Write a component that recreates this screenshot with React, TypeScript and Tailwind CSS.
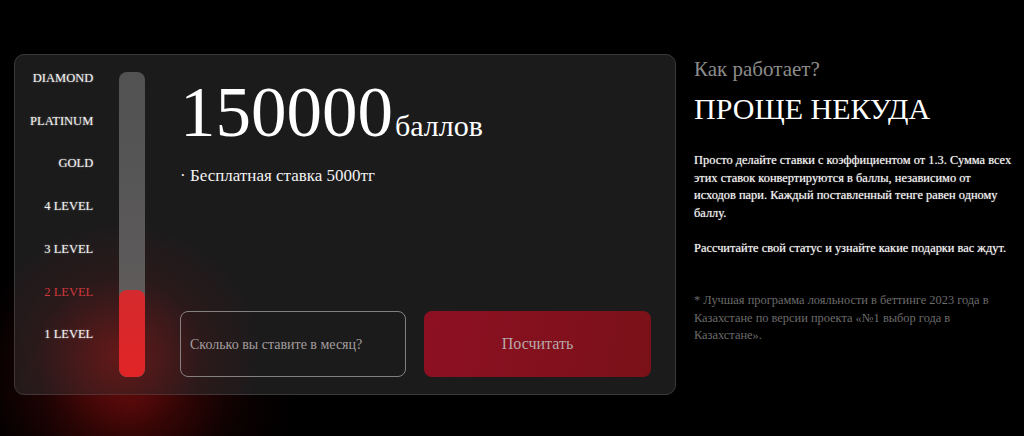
import React from 'react';

const levels = [
    { name: 'DIAMOND', active: false },
    { name: 'PLATINUM', active: false },
    { name: 'GOLD', active: false },
    { name: '4 LEVEL', active: false },
    { name: '3 LEVEL', active: false },
    { name: '2 LEVEL', active: true },
    { name: '1 LEVEL', active: false },
];

const serif = "font-['Liberation_Serif','Times_New_Roman',serif]";

const App: React.FC = () => {
    return (
        <div className={`w-[1024px] h-[436px] bg-black overflow-hidden ${serif}`}>
            <div className="flex pl-[14px] pt-[54px] gap-[18px]">
                {/* calculator card */}
                <div className="relative">
                    <div className="absolute left-[-47px] top-[210px] w-[330px] h-[280px] rounded-full bg-[radial-gradient(closest-side,rgba(150,12,12,0.4),rgba(100,10,10,0.14)_55%,transparent)] pointer-events-none" />
                    <div className="relative w-[662px] h-[341px] rounded-[10px] border border-[#3b3a3b] bg-[#1f1e1f]/90 flex pt-[17px] pb-[17px] pr-[24px]">
                        <div className="absolute left-[-35px] top-[170px] w-[280px] h-[260px] bg-[radial-gradient(closest-side,rgba(170,22,22,0.5),rgba(120,15,15,0.15)_60%,transparent)] pointer-events-none" />
                        <div className="relative w-[79px] -mt-[17px] flex flex-col text-right text-[12.5px] leading-[42.7px] text-[#f4f4f4] [text-shadow:0_0_2px_rgba(255,255,255,0.45)]">
                            <div className="h-[2px]" />
                            {levels.map((lvl) => (
                                <div key={lvl.name} className={lvl.active ? 'text-[#cf383c] [text-shadow:none]' : ''}>
                                    {lvl.name}
                                </div>
                            ))}
                        </div>

                        <div className="relative ml-[26px] w-[26px] h-[305px] rounded-[8px] bg-[linear-gradient(to_bottom,#525252,#5b5959_60%,#6d6363)] flex flex-col justify-end overflow-hidden">
                            <div className="h-[87px] rounded-[8px] bg-[linear-gradient(to_bottom,#d42a2e,#e12426)]" />
                        </div>

                        <div className="relative ml-[35px] flex-1 flex flex-col">
                            <div className="mt-[5px] flex items-baseline gap-[2px] text-white">
                                <span className="text-[71px] leading-[70px]">150000</span>
                                <span className="text-[30px]">баллов</span>
                            </div>
                            <div className="mt-[16px] text-[17px] leading-[24px] text-[#f2f2f2]">· Бесплатная ставка 5000тг</div>

                            <div className="mt-auto flex gap-[18px]">
                                <div className="w-[226px] h-[66px] rounded-[8px] border border-[#858080] flex items-center pl-[9px] text-[14px] text-[#a39e9e]">
                                    Сколько вы ставите в месяц?
                                </div>
                                <button className="w-[227px] h-[66px] rounded-[8px] bg-[linear-gradient(100deg,#8d1022,#7a1119)] text-[16px] text-[#b9a8a8]">
                                    Посчитать
                                </button>
                            </div>
                        </div>
                    </div>
                </div>

                {/* description */}
                <div className="w-[320px] pt-[2px]">
                    <div className="text-[21px] leading-[26px] text-[#8c8c8c]">Как работает?</div>
                    <div className="mt-[9px] text-[30px] leading-[36px] text-white">ПРОЩЕ НЕКУДА</div>
                    <div className="mt-[25px] text-[12.4px] leading-[17.5px] text-[#f4f4f4] [text-shadow:0_0_1px_rgba(255,255,255,0.6)]">
                        <p>
                            Просто делайте ставки с коэффициентом от 1.3. Сумма всех этих ставок конвертируются в баллы, независимо от исходов пари. Каждый поставленный тенге равен одному баллу.
                        </p>
                        <p className="mt-[17.5px]">Рассчитайте свой статус и узнайте какие подарки вас ждут.</p>
                    </div>
                    <p className="mt-[35px] text-[12.4px] leading-[17.5px] text-[#6b6b6b]">
                        * Лучшая программа лояльности в беттинге 2023 года в Казахстане по версии проекта «№1 выбор года в Казахстане».
                    </p>
                </div>
            </div>
        </div>
    );
};

export default App;
